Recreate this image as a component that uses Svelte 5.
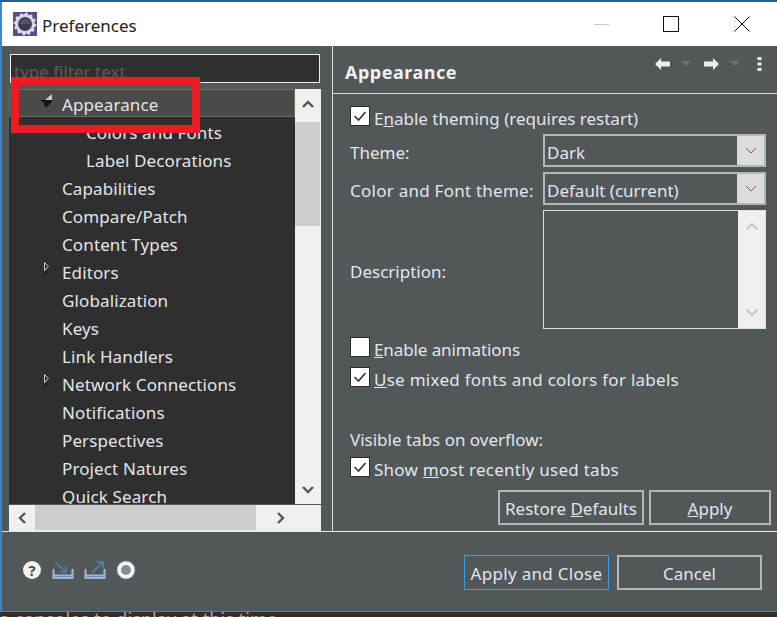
<script>
  const items = [
    { label: 'Appearance', level: 0, open: true, selected: true },
    { label: 'Colors and Fonts', level: 1 },
    { label: 'Label Decorations', level: 1 },
    { label: 'Capabilities', level: 0 },
    { label: 'Compare/Patch', level: 0 },
    { label: 'Content Types', level: 0 },
    { label: 'Editors', level: 0, closed: true },
    { label: 'Globalization', level: 0 },
    { label: 'Keys', level: 0 },
    { label: 'Link Handlers', level: 0 },
    { label: 'Network Connections', level: 0, closed: true },
    { label: 'Notifications', level: 0 },
    { label: 'Perspectives', level: 0 },
    { label: 'Project Natures', level: 0 },
    { label: 'Quick Search', level: 0 }
  ];
</script>

<div class="screen">
  <div class="strip"></div>
  <div class="window">
    <header class="titlebar">
      <svg class="logo" width="24" height="24" viewBox="0 0 24 24">
        <rect width="24" height="24" fill="#5b4a8c" />
        <circle cx="12" cy="12" r="8.5" fill="none" stroke="#d8d8d8" stroke-width="3" />
        <circle cx="12" cy="12" r="10" fill="none" stroke="#e0e0e0" stroke-width="2.5" stroke-dasharray="2.6 2.6" />
        <circle cx="12" cy="12" r="6.5" fill="#3a3a4a" />
        <path d="M6.5 12a5.5 5.5 0 0 1 11 0z" fill="#55506e" />
      </svg>
      <span class="title">Preferences</span>
      <div class="winctl">
        <span class="min"></span>
        <span class="max"></span>
        <svg width="16" height="16" viewBox="0 0 16 16"><path d="M.5.5l15 15M15.5.5l-15 15" stroke="#111" fill="none" /></svg>
      </div>
    </header>

    <div class="main">
      <aside class="left">
        <div class="filter">type filter text</div>
        <div class="treebox">
          <div class="tree">
            <ul>
              {#each items as it}
                <li class:selected={it.selected} class:sub={it.level === 1}>
                  {#if it.open}
                    <svg class="twist" width="14" height="16" viewBox="0 0 14 16">
                      <path d="M12 1v6H5z" fill="#c8c8c8" />
                      <path d="M0 7h12v2l-5 5H5l-1-4z" fill="#161616" />
                    </svg>
                  {:else if it.closed}
                    <svg class="twist closed" width="14" height="16" viewBox="0 0 14 16">
                      <path d="M3.500 1.500l4 4-4 4z" fill="none" stroke="#c9c9c9" />
                      <path d="M2 13l5-3 1 1-5 3z" fill="#191919" />
                    </svg>
                  {/if}
                  <span>{it.label}</span>
                </li>
              {/each}
            </ul>
            <div class="vscroll">
              <button class="arrow up" aria-label="up">
                <svg width="14" height="10" viewBox="0 0 14 10"><path d="M2 8l5-5 5 5" fill="none" stroke="#555" stroke-width="2.4" /></svg>
              </button>
              <div class="vtrack"><div class="vthumb"></div></div>
              <button class="arrow down" aria-label="down">
                <svg width="14" height="10" viewBox="0 0 14 10"><path d="M2 2l5 5 5-5" fill="none" stroke="#555" stroke-width="2.4" /></svg>
              </button>
            </div>
          </div>
          <div class="hscroll">
            <button class="harrow" aria-label="left">
              <svg width="10" height="14" viewBox="0 0 10 14"><path d="M8 2L3 7l5 5" fill="none" stroke="#555" stroke-width="2.4" /></svg>
            </button>
            <div class="hthumb"></div>
            <button class="harrow next" aria-label="right">
              <svg width="10" height="14" viewBox="0 0 10 14"><path d="M2 2l5 5-5 5" fill="none" stroke="#555" stroke-width="2.4" /></svg>
            </button>
          </div>
        </div>
        <div class="redbox"></div>
      </aside>

      <section class="right">
        <div class="head">
          <h1>Appearance</h1>
          <div class="tools">
            <svg class="t-back" width="15" height="12" viewBox="0 0 15 12"><path d="M0 6l6-6v3.500h9v5H6V12z" fill="#eee" /></svg>
            <svg class="t-menu" width="12" height="6" viewBox="0 0 12 6"><path d="M1 0h10L6 5z" fill="#6c7073" /></svg>
            <svg class="t-fwd" width="15" height="12" viewBox="0 0 15 12"><path d="M15 6L9 0v3.500H0v5h9V12z" fill="#eee" /></svg>
            <svg class="t-menu" width="12" height="6" viewBox="0 0 12 6"><path d="M1 0h10L6 5z" fill="#6c7073" /></svg>
            <svg class="t-dots" width="5" height="14" viewBox="0 0 5 14"><path d="M.5 0h4v3h-4zM.5 5.500h4v3h-4zM.5 11h4v3h-4z" fill="#eee" /></svg>
          </div>
        </div>

        <div class="body">
          <label class="check first"><span class="box"><svg width="18" height="18" viewBox="0 0 18 18"><path d="M3.500 9l4 4 7-8" fill="none" stroke="#333" stroke-width="1.600" /></svg></span><span class="txt">E<u>n</u>able theming (requires restart)</span></label>

          <div class="form">
            <span class="lab">Theme:</span>
            <div class="combo"><span>Dark</span><i><svg width="12" height="7" viewBox="0 0 12 7"><path d="M1 1l5 5 5-5" fill="none" stroke="#666" /></svg></i></div>
            <span class="lab wide">Color and Font theme:</span>
            <div class="combo"><span>Default (current)</span><i><svg width="12" height="7" viewBox="0 0 12 7"><path d="M1 1l5 5 5-5" fill="none" stroke="#666" /></svg></i></div>
            <span class="lab">Description:</span>
            <div class="desc">
              <div class="descbar">
                <svg width="14" height="10" viewBox="0 0 14 10"><path d="M2 8l5-5 5 5" fill="none" stroke="#c4c4c4" stroke-width="2.2" /></svg>
                <svg width="14" height="10" viewBox="0 0 14 10"><path d="M2 2l5 5 5-5" fill="none" stroke="#c4c4c4" stroke-width="2.2" /></svg>
              </div>
            </div>
          </div>

          <label class="check anim"><span class="box"></span><span class="txt"><u>E</u>nable animations</span></label>
          <label class="check mixed"><span class="box"><svg width="18" height="18" viewBox="0 0 18 18"><path d="M3.500 9l4 4 7-8" fill="none" stroke="#333" stroke-width="1.600" /></svg></span><span class="txt"><u>U</u>se mixed fonts and colors for labels</span></label>

          <div class="tabslabel">Visible tabs on overflow:</div>
          <label class="check recent"><span class="box"><svg width="18" height="18" viewBox="0 0 18 18"><path d="M3.500 9l4 4 7-8" fill="none" stroke="#333" stroke-width="1.600" /></svg></span><span class="txt">Show <u>m</u>ost recently used tabs</span></label>

          <div class="btnrow">
            <button class="btn restore">Restore <u>D</u>efaults</button>
            <button class="btn apply"><u>A</u>pply</button>
          </div>
        </div>
      </section>
    </div>

    <footer class="foot">
      <div class="icons">
        <svg width="20" height="20" viewBox="0 0 20 20">
          <circle cx="10" cy="10" r="9" fill="#f2f2f2" />
          <text x="10" y="15.500" text-anchor="middle" class="q">?</text>
        </svg>
        <svg width="22" height="20" viewBox="0 0 22 20">
          <path d="M1.500 9v9h19V9M1.500 15.500h19" fill="none" stroke="#9db7d8" stroke-width="2" />
          <path d="M3 2l11 10M14 6v6H8" fill="none" stroke="#4d86a8" stroke-width="1.600" />
        </svg>
        <svg width="22" height="20" viewBox="0 0 22 20">
          <path d="M1.500 9v9h19V9M1.500 15.500h19" fill="none" stroke="#9db7d8" stroke-width="2" />
          <path d="M8 13L19 2M13 2h6v6" fill="none" stroke="#4d86a8" stroke-width="1.600" />
        </svg>
        <svg width="20" height="20" viewBox="0 0 20 20">
          <circle cx="10" cy="10" r="9" fill="#f4f6fa" stroke="#6f9ccf" stroke-width=".8" />
          <circle cx="10" cy="10" r="5" fill="#8b8b8b" />
        </svg>
      </div>
      <div class="footbtns">
        <button class="btn close">Apply and Close</button>
        <button class="btn cancel">Cancel</button>
      </div>
    </footer>
  </div>
  <div class="behind">o consoles to display at this time.</div>
</div>

<style>
  :global(body) {
    margin: 0;
    background: #2f2f2f;
  }

  .screen {
    width: 777px;
    height: 617px;
    overflow: hidden;
    display: flex;
    flex-direction: column;
    font-family: "Noto Sans", "Open Sans", sans-serif;
    font-size: 17px;
    color: #e2e6ea;
    position: relative;
  }

  .strip {
    height: 2px;
    flex: none;
    background: #2b5d88;
  }

  .window {
    height: 610px;
    flex: none;
    border-left: 2px solid #3f86c5;
    border-bottom: 1px solid #3f86c5;
    box-sizing: border-box;
    background: #52575a;
    display: flex;
    flex-direction: column;
  }

  .titlebar {
    height: 44px;
    flex: none;
    background: #fff;
    display: flex;
    align-items: center;
    padding-left: 11px;
    color: #222;
  }

  .logo {
    flex: none;
  }

  .title {
    margin: 3px 0 0 5px;
    font-size: 17px;
  }

  .winctl {
    margin-left: auto;
    display: flex;
    align-items: center;
    gap: 55px;
    padding-right: 27px;
  }

  .min {
    width: 15px;
    height: 1px;
    margin-right: -1px;
    background: #c8c8c8;
  }

  .max {
    width: 14px;
    height: 14px;
    border: 1px solid #111;
  }

  .main {
    height: 485px;
    flex: none;
    display: flex;
    border-bottom: 1px solid #e6e6e6;
  }

  .left {
    width: 330px;
    flex: none;
    position: relative;
    box-sizing: border-box;
    padding: 8px 0 0 7px;
  }

  .filter {
    width: 310px;
    height: 29px;
    margin-left: 1px;
    box-sizing: border-box;
    border: 1px solid #eee;
    background: #2f2f2f;
    color: #5c5c5c;
    padding-left: 3px;
    line-height: 33px;
    overflow: hidden;
  }

  .treebox {
    margin-top: 6px;
    width: 312px;
  }

  .tree {
    display: flex;
    height: 415px;
  }

  ul {
    list-style: none;
    margin: 0;
    padding: 0;
    width: 286px;
    height: 415px;
    background: #2f2f2f;
    overflow: hidden;
  }

  li {
    height: 28px;
    line-height: 31px;
    padding-left: 53px;
    position: relative;
    box-sizing: border-box;
    white-space: nowrap;
    letter-spacing: .12px;
  }

  li.sub {
    padding-left: 77px;
  }

  li.selected {
    background: #4a4a4a;
    border: 1px solid #6f6c5d;
    padding-left: 52px;
    line-height: 29px;
    letter-spacing: .1px;
  }

  .twist {
    position: absolute;
    left: 30px;
    top: 3px;
  }

  .twist.closed {
    left: 32px;
    top: 4px;
  }

  .vscroll {
    width: 26px;
    background: #f0f0f0;
    display: flex;
    flex-direction: column;
  }

  .arrow {
    border: 0;
    padding: 0;
    background: none;
    display: flex;
    align-items: center;
    justify-content: center;
  }

  .arrow.up {
    height: 30px;
  }

  .arrow.down {
    height: 28px;
  }

  .vtrack {
    flex: 1;
  }

  .vthumb {
    height: 104px;
    margin: 3px 1px 0 0;
    background: #cdcdcd;
  }

  .hscroll {
    height: 26px;
    margin-top: 1px;
    background: #f0f0f0;
    display: flex;
    align-items: stretch;
  }

  .harrow {
    width: 26px;
    border: 0;
    padding: 0;
    background: none;
    display: flex;
    align-items: center;
    justify-content: center;
  }

  .harrow.next {
    margin-left: 12px;
  }

  .hthumb {
    width: 221px;
    background: #cdcdcd;
    margin-bottom: 1px;
  }

  .redbox {
    position: absolute;
    left: 9px;
    top: 31px;
    width: 189px;
    height: 56px;
    box-sizing: border-box;
    border: 8px solid #ed1c24;
  }

  .right {
    flex: 1;
    border-left: 1px solid #e0e0e0;
    min-width: 0;
  }

  .head {
    height: 47px;
    border-bottom: 1px solid #d8d8d8;
    position: relative;
  }

  h1 {
    margin: 0;
    padding: 13px 0 0 12px;
    font-size: 18px;
    line-height: 26px;
    font-weight: 700;
    letter-spacing: .5px;
    color: #f0f0f0;
  }

  .tools {
    position: absolute;
    right: 15px;
    top: 11px;
    display: flex;
    align-items: center;
  }

  .t-back {
    margin-right: 10px;
  }

  .t-fwd {
    margin: 0 10px 0 12px;
  }

  .t-dots {
    margin-left: 16px;
  }

  .body {
    padding: 0 6px 0 17px;
  }

  .check {
    display: flex;
    align-items: center;
    gap: 4px;
    height: 20px;
    white-space: nowrap;
  }

  .txt {
    margin-top: 5px;
  }

  .check.first {
    margin-top: 12px;
  }

  .check.anim {
    margin-top: 8px;
  }

  .check.anim .txt {
    letter-spacing: -.1px;
  }

  .check.mixed {
    margin-top: 10px;
  }

  .check.mixed .txt {
    letter-spacing: .27px;
  }

  .check.recent {
    margin-top: 5px;
  }

  .check.recent .txt {
    letter-spacing: .25px;
  }

  .box {
    width: 18px;
    height: 18px;
    background: #fff;
    border: 1px solid #2a2a2a;
    flex: none;
  }

  .box svg {
    display: block;
  }

  .form {
    display: grid;
    grid-template-columns: 193px 223px;
    grid-template-rows: 33px 33px 119px;
    row-gap: 5px;
    margin-top: 8px;
    align-items: center;
  }

  .lab {
    margin-top: 3px;
  }

  .lab.wide {
    letter-spacing: .25px;
  }

  .combo {
    height: 33px;
    box-sizing: border-box;
    border: 2px solid #b4b7b9;
    background: #52575a;
    display: flex;
    align-items: center;
    padding-left: 2px;
  }

  .combo span {
    margin-top: 4px;
  }

  .combo i {
    margin-left: auto;
    width: 27px;
    align-self: stretch;
    background: #dcdcdc;
    display: flex;
    align-items: center;
    justify-content: center;
  }

  .desc {
    height: 119px;
    box-sizing: border-box;
    border: 1px solid #e0e0e0;
    display: flex;
    justify-content: flex-end;
  }

  .descbar {
    width: 27px;
    background: #f0f0f0;
    display: flex;
    flex-direction: column;
    align-items: center;
    justify-content: space-between;
    padding: 10px 0;
    box-sizing: border-box;
  }

  .tabslabel {
    margin-top: 41px;
    line-height: 24px;
    height: 24px;
  }

  .btnrow {
    display: flex;
    justify-content: flex-end;
    gap: 5px;
    margin-top: 13px;
  }

  .btn {
    height: 35px;
    box-sizing: border-box;
    background: #52575a;
    border: 2px solid #b4b7b9;
    color: #e2e6ea;
    font: inherit;
    padding: 2px 0 0;
  }

  .restore {
    width: 146px;
  }

  .apply {
    width: 122px;
  }

  .foot {
    flex: 1;
    display: flex;
    align-items: center;
    justify-content: space-between;
  }

  .icons {
    display: flex;
    align-items: center;
    gap: 10px;
    margin: 0 0 3px 20px;
  }

  .q {
    font-size: 15px;
    font-weight: 700;
    fill: #4d4d55;
  }

  .footbtns {
    display: flex;
    gap: 8px;
    padding-right: 15px;
    margin-top: 1px;
  }

  .close {
    width: 145px;
    border: 1px solid #3f9be0;
    letter-spacing: .3px;
  }

  .cancel {
    width: 145px;
  }

  .behind {
    height: 5px;
    font-size: 18px;
    line-height: 14px;
    letter-spacing: .1px;
    color: #a9a9a9;
    white-space: nowrap;
    overflow: hidden;
    margin-left: -1px;
  }
</style>
